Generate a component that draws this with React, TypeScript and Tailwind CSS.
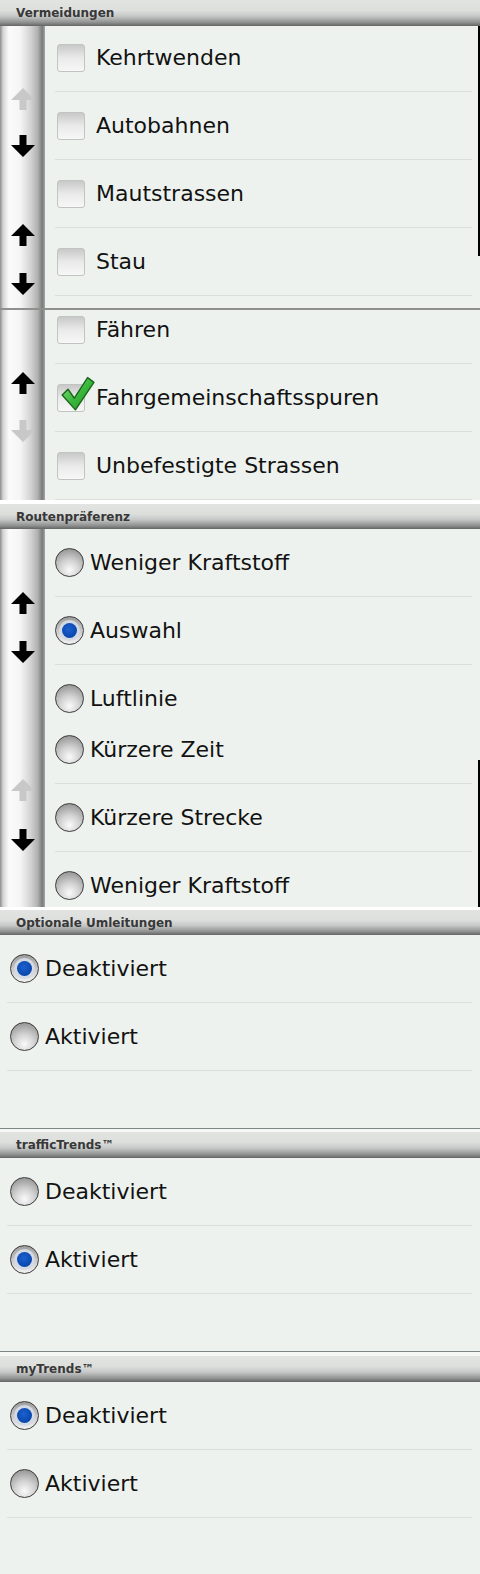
import React from "react";

type Arrow = { dir: "up" | "down"; on: boolean; mt: string };
type Item = { label: string; checked?: boolean };

const headerBg =
  "bg-[linear-gradient(to_bottom,#e2e4e2_0%,#dddfdd_40%,#c6c8c8_62%,#909292_86%,#636565_100%)]";
const barBg =
  "bg-[linear-gradient(to_right,#8d8d8d_0%,#d4d4d4_7%,#fbfbfb_20%,#f5f5f5_45%,#d3d3d3_68%,#b0b0b0_84%,#7a7a7a_94%,#a6a6a6_100%)]";

const SectionHeader = ({ title, h }: { title: string; h: string }) => (
  <div className={`${h} ${headerBg} flex items-center pl-4`}>
    <span className="text-[12px] font-bold text-[#383838] leading-none">{title}</span>
  </div>
);

const ArrowIcon = ({ dir, on }: { dir: "up" | "down"; on: boolean }) => (
  <svg width="24" height="22" viewBox="0 0 24 22" className={dir === "down" ? "rotate-180" : ""}>
    <path d="M12 0 L24 12 L15.5 12 L15.5 22 L8.5 22 L8.5 12 L0 12 Z" fill={on ? "#000000" : "#c8c8c8"} />
  </svg>
);

const ScrollBar = ({ arrows }: { arrows: Arrow[] }) => (
  <div className={`w-[45px] shrink-0 flex flex-col items-center ${barBg}`}>
    {arrows.map((a, i) => (
      <div key={i} className={a.mt}>
        <ArrowIcon dir={a.dir} on={a.on} />
      </div>
    ))}
  </div>
);

const CheckBox = ({ checked }: { checked?: boolean }) => (
  <div className="relative w-[28px] h-[28px] shrink-0 rounded-[3px] border border-[#c2c4c2] bg-gradient-to-b from-[#c8c9c8] via-[#e9eae9] to-[#f7f7f7]">
    {checked && (
      <svg className="absolute left-[1px] top-[-9px]" width="36" height="36" viewBox="0 0 34 34">
        <defs>
          <linearGradient id="chk" x1="0" y1="0" x2="1" y2="1">
            <stop offset="0" stopColor="#8be58b" />
            <stop offset="0.5" stopColor="#3cb93c" />
            <stop offset="1" stopColor="#1e8f1e" />
          </linearGradient>
        </defs>
        <path
          d="M3 18 L8.5 12.5 L14.5 21 L27 1.5 L33 6 L15.5 32 Z"
          fill="url(#chk)"
          stroke="#1b651b"
          strokeWidth="1.3"
          strokeLinejoin="round"
        />
      </svg>
    )}
  </div>
);

const Radio = ({ on }: { on?: boolean }) =>
  on ? (
    <div className="w-[29px] h-[29px] shrink-0 rounded-full border-[1.5px] border-[#3c3c3c] bg-[linear-gradient(to_bottom,#9c9c9c,#f2f2f2)] flex items-center justify-center">
      <div className="w-[21px] h-[21px] rounded-full bg-[#d3dae3] flex items-center justify-center">
        <div className="w-[15px] h-[15px] rounded-full bg-[radial-gradient(circle_at_45%_40%,#1d61cf_0%,#0b4ab2_60%,#083c93_100%)]" />
      </div>
    </div>
  ) : (
    <div className="w-[29px] h-[29px] shrink-0 rounded-full border-[1.5px] border-[#3c3c3c] bg-[radial-gradient(circle_at_50%_78%,#fafafa_0%,#d2d2d2_40%,#828282_100%)]" />
  );

const CheckRow = ({ item }: { item: Item }) => (
  <div className="h-[68px] flex items-center gap-[11px] border-b border-[#dadfda] pl-[2px]">
    <CheckBox checked={item.checked} />
    <span className="text-[22px] text-[#121212] leading-none">{item.label}</span>
  </div>
);

const RadioRow = ({ item, inset = "" }: { item: Item; inset?: string }) => (
  <div className={`h-[68px] flex items-center gap-[6px] border-b border-[#dadfda] ${inset}`}>
    <Radio on={item.checked} />
    <span className="text-[22px] text-[#121212] leading-none">{item.label}</span>
  </div>
);

const App = () => {
  return (
    <div className="w-[480px] h-[1574px] overflow-hidden bg-[#eef2ee] font-['DejaVu_Sans','Liberation_Sans',sans-serif]">
      {/* Vermeidungen */}
      <SectionHeader title="Vermeidungen" h="h-[26px]" />
      <div className="h-[282px] flex overflow-hidden">
        <ScrollBar
          arrows={[
            { dir: "up", on: false, mt: "mt-[62px]" },
            { dir: "down", on: true, mt: "mt-[25px]" },
            { dir: "up", on: true, mt: "mt-[67px]" },
            { dir: "down", on: true, mt: "mt-[27px]" },
          ]}
        />
        <div className="flex-1 pl-[10px] pr-[6px] overflow-hidden">
          <div className="mt-[-2px]">
            {["Kehrtwenden", "Autobahnen", "Mautstrassen", "Stau"].map((l) => (
              <CheckRow key={l} item={{ label: l }} />
            ))}
          </div>
        </div>
        <div className="w-[2px] shrink-0 flex flex-col">
          <div className="h-[230px] bg-black" />
        </div>
      </div>
      <div className="h-[2px] bg-[#8d908d]" />
      <div className="h-[190px] flex overflow-hidden">
        <ScrollBar
          arrows={[
            { dir: "up", on: true, mt: "mt-[62px]" },
            { dir: "down", on: false, mt: "mt-[26px]" },
          ]}
        />
        <div className="flex-1 pl-[10px] pr-[8px] overflow-hidden">
          <div className="mt-[-14px]">
            <CheckRow item={{ label: "Fähren" }} />
            <CheckRow item={{ label: "Fahrgemeinschaftsspuren", checked: true }} />
            <CheckRow item={{ label: "Unbefestigte Strassen" }} />
          </div>
        </div>
      </div>
      <div className="h-[4px] bg-white" />

      {/* Routenpräferenz */}
      <SectionHeader title="Routenpräferenz" h="h-[25px]" />
      <div className="h-[190px] flex overflow-hidden">
        <ScrollBar
          arrows={[
            { dir: "up", on: true, mt: "mt-[63px]" },
            { dir: "down", on: true, mt: "mt-[27px]" },
          ]}
        />
        <div className="flex-1 pl-[10px] pr-[8px] overflow-hidden">
          <RadioRow item={{ label: "Weniger Kraftstoff" }} />
          <RadioRow item={{ label: "Auswahl", checked: true }} />
          <RadioRow item={{ label: "Luftlinie" }} />
        </div>
      </div>
      <div className="h-[188px] flex overflow-hidden">
        <ScrollBar
          arrows={[
            { dir: "up", on: false, mt: "mt-[60px]" },
            { dir: "down", on: true, mt: "mt-[28px]" },
          ]}
        />
        <div className="flex-1 pl-[10px] pr-[6px] overflow-hidden">
          <div className="mt-[-3px]">
            <RadioRow item={{ label: "Kürzere Zeit" }} />
            <RadioRow item={{ label: "Kürzere Strecke" }} />
            <RadioRow item={{ label: "Weniger Kraftstoff" }} />
          </div>
        </div>
        <div className="w-[2px] shrink-0 flex flex-col">
          <div className="h-[41px]" />
          <div className="flex-1 bg-black" />
        </div>
      </div>
      <div className="h-[3px] bg-white" />

      {/* Optionale Umleitungen */}
      <SectionHeader title="Optionale Umleitungen" h="h-[25px]" />
      <div className="h-[193px] pl-[7px] pr-[8px]">
        <RadioRow item={{ label: "Deaktiviert", checked: true }} inset="pl-[3px]" />
        <RadioRow item={{ label: "Aktiviert" }} inset="pl-[3px]" />
      </div>
      <div className="h-[1px] bg-[#7c8686]" />
      <div className="h-[3px] bg-[#f5f7f5]" />

      {/* trafficTrends */}
      <SectionHeader title="trafficTrends™" h="h-[26px]" />
      <div className="h-[193px] pl-[7px] pr-[8px]">
        <RadioRow item={{ label: "Deaktiviert" }} inset="pl-[3px]" />
        <RadioRow item={{ label: "Aktiviert", checked: true }} inset="pl-[3px]" />
      </div>
      <div className="h-[1px] bg-[#7c8686]" />
      <div className="h-[4px] bg-[#f5f7f5]" />

      {/* myTrends */}
      <SectionHeader title="myTrends™" h="h-[26px]" />
      <div className="h-[192px] pl-[7px] pr-[8px]">
        <RadioRow item={{ label: "Deaktiviert", checked: true }} inset="pl-[3px]" />
        <RadioRow item={{ label: "Aktiviert" }} inset="pl-[3px]" />
      </div>
    </div>
  );
};

export default App;
